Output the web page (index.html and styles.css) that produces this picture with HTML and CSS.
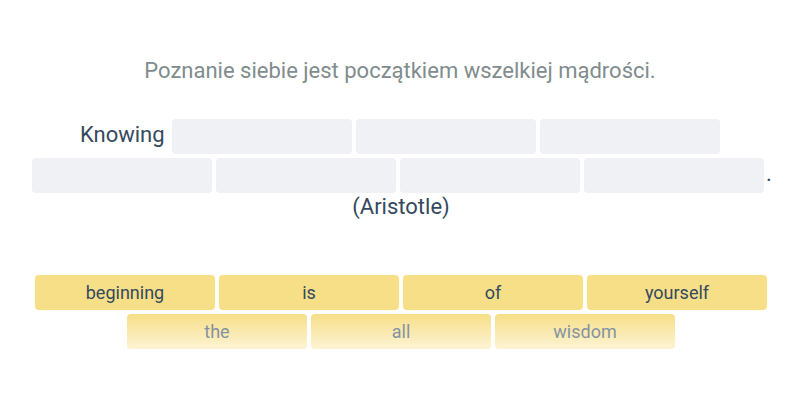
FILE: index.html
```html
<!DOCTYPE html>
<html lang="en">
<head>
    <meta charset="UTF-8">
    <meta name="viewport" content="width=device-width, initial-scale=1.0">
    <title>Sentence Builder</title>
    <link rel="stylesheet" href="styles.css">
</head>
<body>
    <div class="exercise">
        <p class="prompt">Poznanie siebie jest początkiem wszelkiej mądrości.</p>

        <div class="sentence">Knowing <span class="blank"></span><span class="blank"></span><span class="blank"></span><span class="blank"></span><span class="blank"></span><span class="blank"></span><span class="blank"></span>.</div>
        <div class="author">(Aristotle)</div>

        <div class="bank">
            <div class="bank-row">
                <button class="word">beginning</button>
                <button class="word">is</button>
                <button class="word">of</button>
                <button class="word">yourself</button>
            </div>
            <div class="bank-row">
                <button class="word faded">the</button>
                <button class="word faded">all</button>
                <button class="word faded">wisdom</button>
            </div>
        </div>
    </div>
</body>
</html>
```

FILE: styles.css
```css
body {
    margin: 0;
    font-family: Roboto, "Liberation Sans", Arial, sans-serif;
    background-color: #ffffff;
    color: #34495e;
}
.exercise {
    width: 800px;
    padding-top: 57px;
    text-align: center;
}
.prompt {
    margin: 0;
    font-size: 22px;
    line-height: 28px;
    color: #7f8c8d;
}
.sentence {
    margin: 30px auto 0;
    padding-left: 2px;
    width: 750px;
    font-size: 22px;
    line-height: 39px;
}
.blank {
    display: inline-block;
    width: 180px;
    height: 35px;
    margin: 0 2px;
    vertical-align: middle;
    background-color: #f0f1f5;
    border-radius: 4px;
}
.author {
    padding-left: 2px;
    font-size: 22px;
    line-height: 28px;
}
.bank {
    margin-top: 54px;
    display: flex;
    flex-direction: column;
    align-items: center;
    gap: 4px;
    padding-left: 2px;
}
.bank-row {
    display: flex;
    justify-content: center;
    gap: 4px;
}
.word {
    width: 180px;
    height: 35px;
    border: none;
    border-radius: 4px;
    background-color: #f7df88;
    color: #34495e;
    font-family: inherit;
    font-size: 18px;
    cursor: pointer;
}
.word.faded {
    background: linear-gradient(#f7df88, #fcf3d3);
    color: #8593a0;
}
```
